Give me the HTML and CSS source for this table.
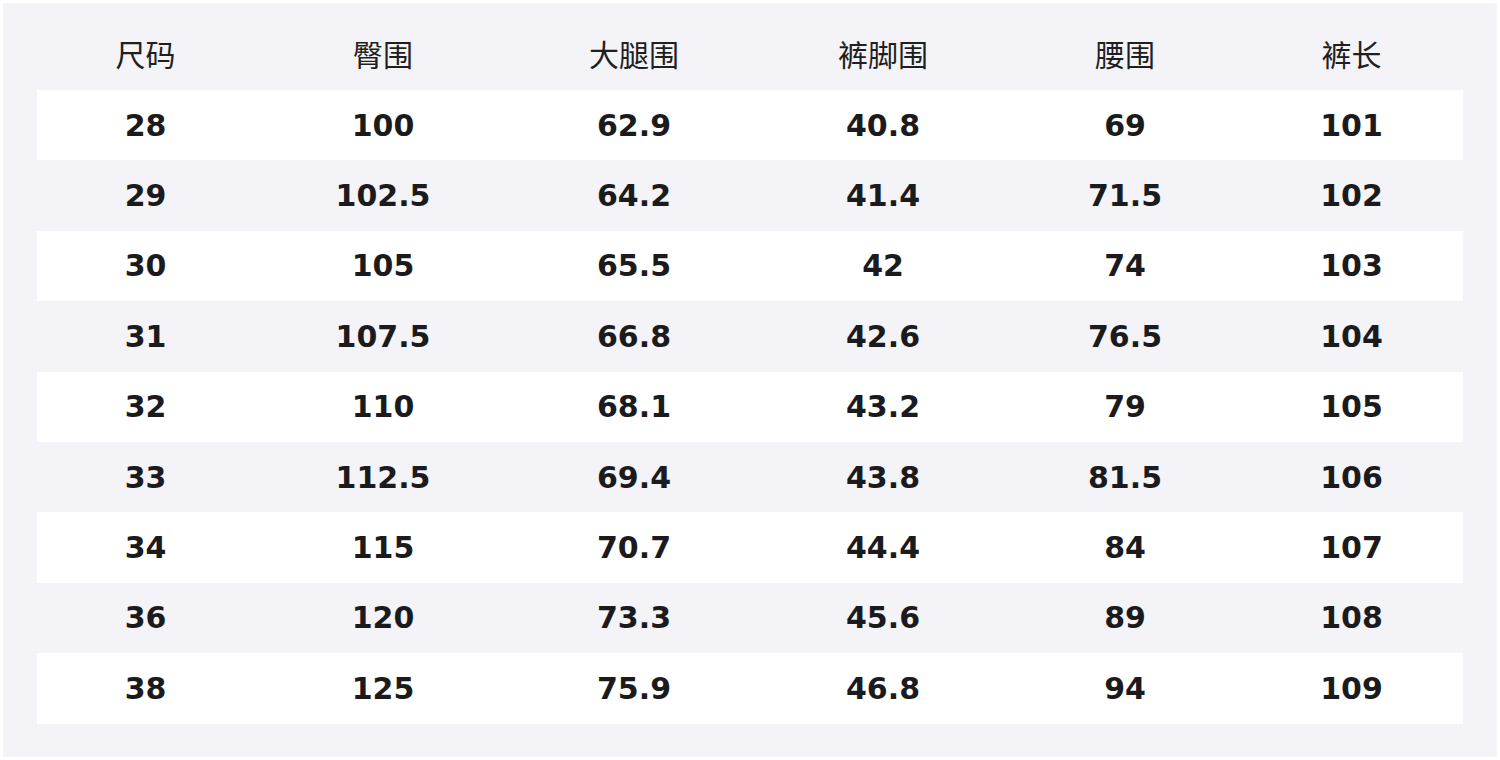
FILE: index.html
```html
<!DOCTYPE html>
<html lang="zh">
<head>
<meta charset="utf-8">
<title>尺码表</title>
<link rel="stylesheet" href="styles.css">
</head>
<body>
<div class="panel">
  <div class="row head">
    <div>尺码</div><div>臀围</div><div>大腿围</div><div>裤脚围</div><div>腰围</div><div>裤长</div>
  </div>
  <div class="row odd"><div>28</div><div>100</div><div>62.9</div><div>40.8</div><div>69</div><div>101</div></div>
  <div class="row"><div>29</div><div>102.5</div><div>64.2</div><div>41.4</div><div>71.5</div><div>102</div></div>
  <div class="row odd"><div>30</div><div>105</div><div>65.5</div><div>42</div><div>74</div><div>103</div></div>
  <div class="row"><div>31</div><div>107.5</div><div>66.8</div><div>42.6</div><div>76.5</div><div>104</div></div>
  <div class="row odd"><div>32</div><div>110</div><div>68.1</div><div>43.2</div><div>79</div><div>105</div></div>
  <div class="row"><div>33</div><div>112.5</div><div>69.4</div><div>43.8</div><div>81.5</div><div>106</div></div>
  <div class="row odd"><div>34</div><div>115</div><div>70.7</div><div>44.4</div><div>84</div><div>107</div></div>
  <div class="row"><div>36</div><div>120</div><div>73.3</div><div>45.6</div><div>89</div><div>108</div></div>
  <div class="row odd"><div>38</div><div>125</div><div>75.9</div><div>46.8</div><div>94</div><div>109</div></div>
</div>
</body>
</html>
```
FILE: styles.css
```css
html, body {
  margin: 0;
  padding: 0;
  background: #ffffff;
}
body {
  padding: 3px;
  height: 760px;
  box-sizing: border-box;
}
.panel {
  background: #f3f3f8;
  height: 754px;
  padding: 0 34px;
  box-sizing: border-box;
}
.row {
  display: grid;
  grid-template-columns: 217px 258px 244px 254px 230px 223px;
  height: 70.4px;
  align-items: center;
  text-align: center;
  font-family: "DejaVu Sans", "Noto Sans CJK SC", sans-serif;
  font-weight: bold;
  font-size: 30px;
  color: #1b1b1d;
}
.row.odd {
  background: #ffffff;
}
.row.head {
  height: 87px;
  padding-top: 12px;
  box-sizing: border-box;
  font-family: "Noto Sans CJK SC", sans-serif;
  font-weight: normal;
  font-size: 30px;
  color: #1f1f22;
}
```
